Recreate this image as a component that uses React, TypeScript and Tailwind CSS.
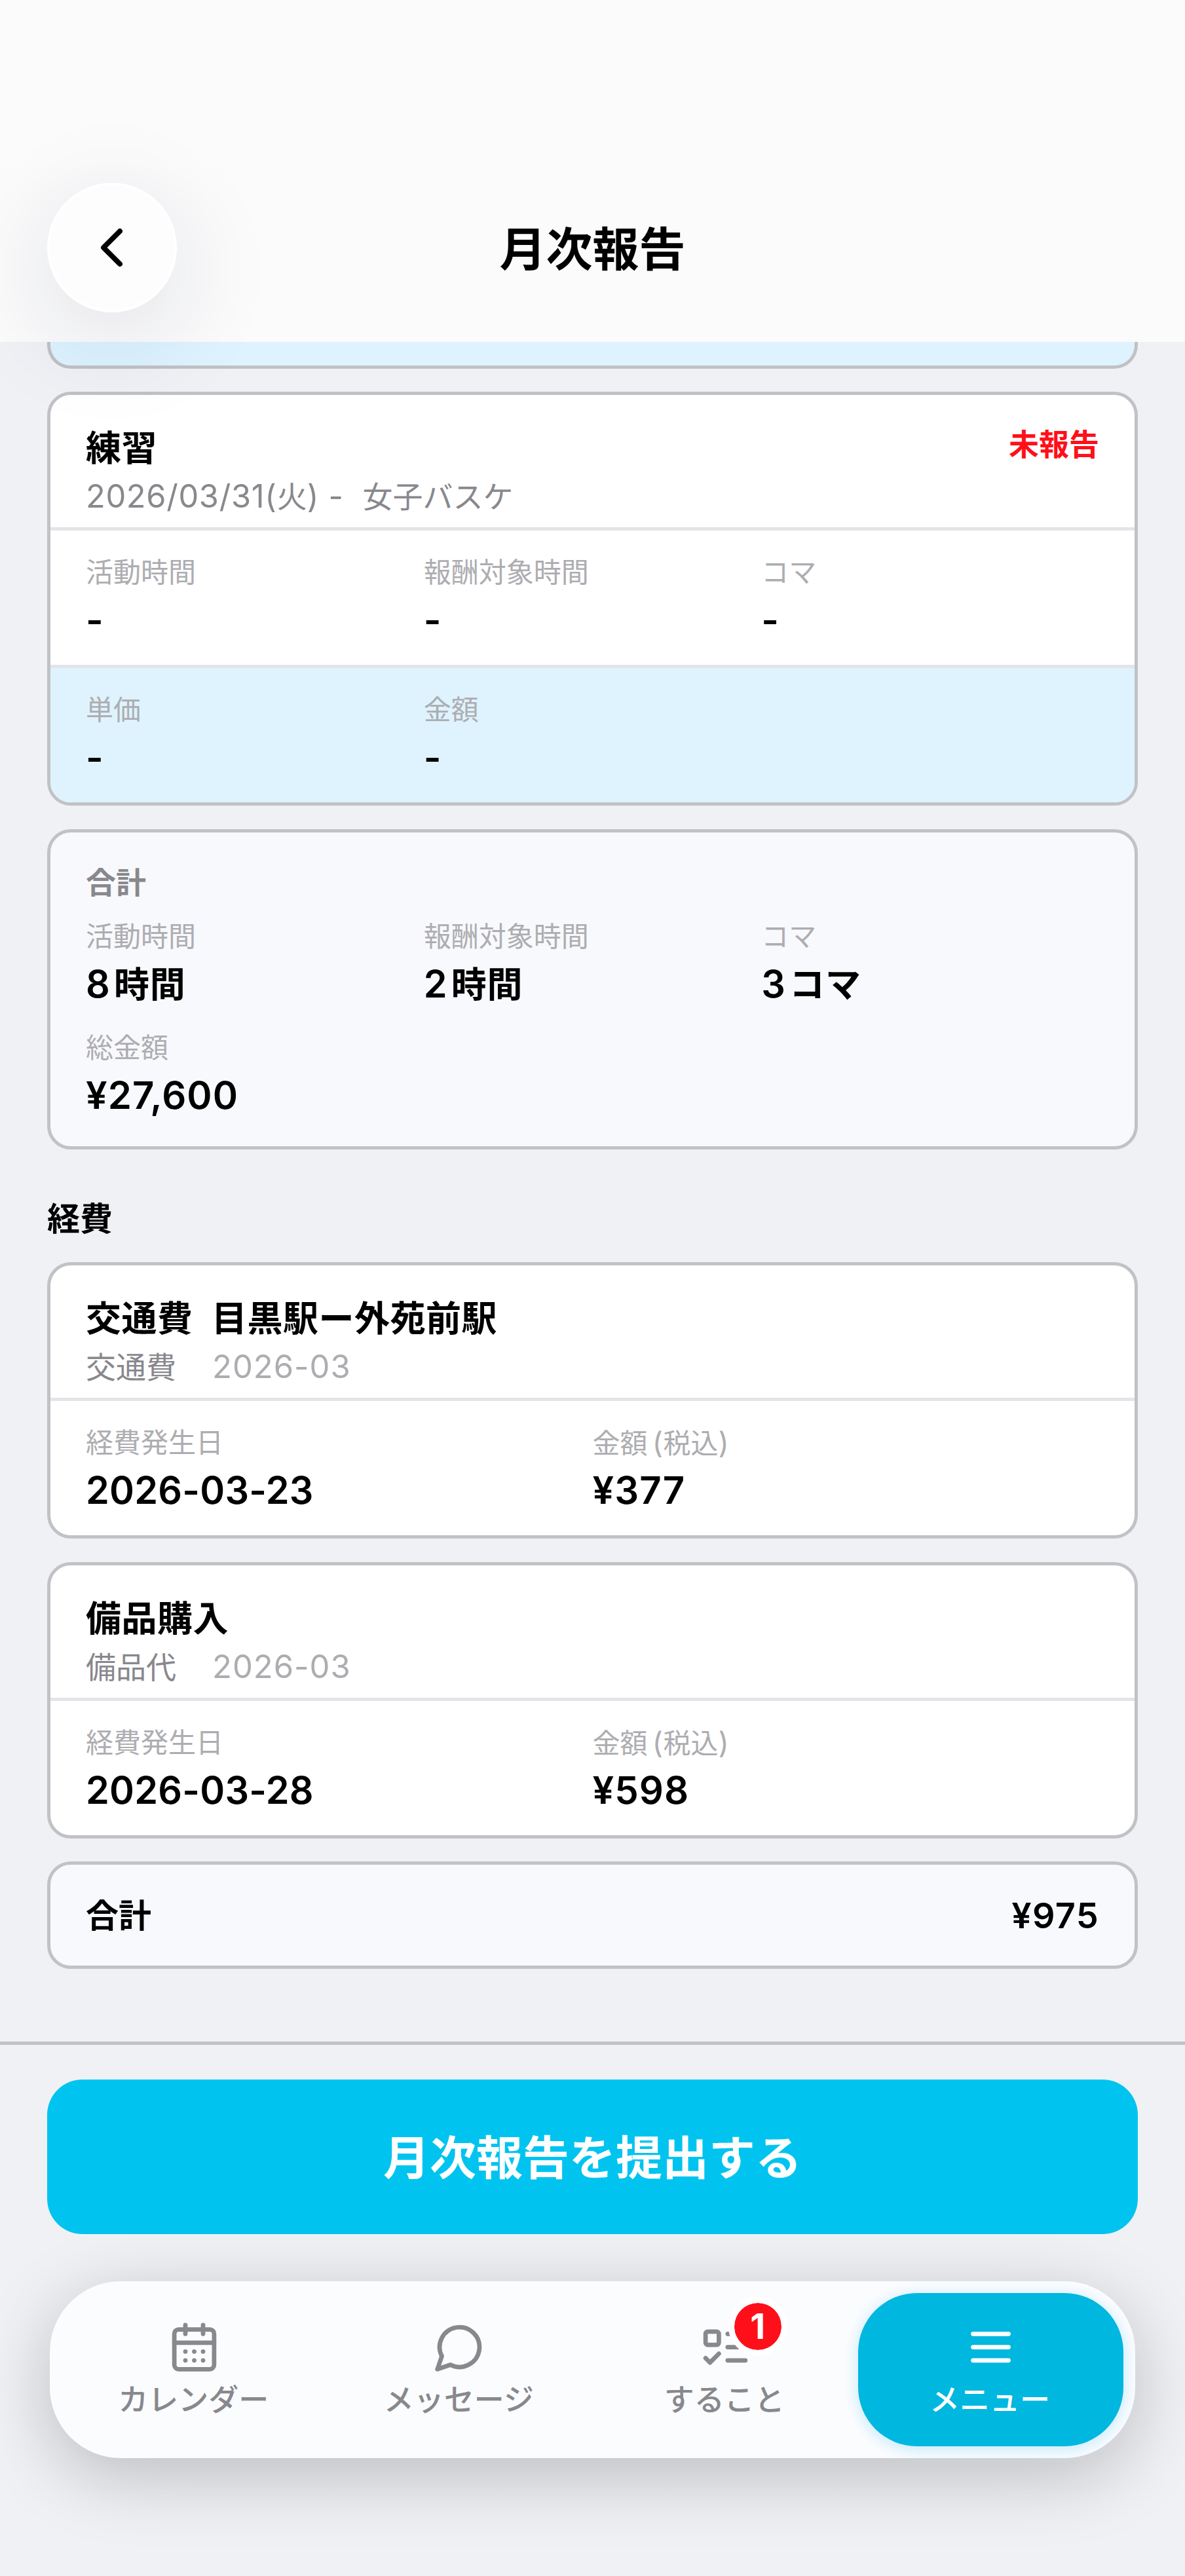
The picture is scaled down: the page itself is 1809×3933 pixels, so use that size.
import React from "react";

// Latin runs are set a little larger than the Japanese ones
const Mix = ({ text }: { text: string }) => {
    const runs = text.match(/[\x20-\x7e¥]+|[^\x20-\x7e¥]+/g) || [];
    return (
        <>
            {runs.map((run, i) =>
                /^[\x20-\x7e¥]/.test(run) ? (
                    <span key={i} className="text-[1.06em] tracking-[0.014em]">{run}</span>
                ) : (
                    <span key={i}>{run}</span>
                )
            )}
        </>
    );
};

// a number, with an optional unit after it
const Value = ({ value }: { value: string }) => {
    const [, num, unit] = value.match(/^([\x20-\x7e¥]+)(.*)$/) || ["", value, ""];
    return (
        <>
            <span className={num.startsWith("¥") ? "text-[1.075em] tracking-[0.018em]" : "text-[1.065em] tracking-[0.004em]"}>
                {num}
            </span>
            {unit && <span className="ml-[0.11em] font-bold tracking-[0.016em]">{unit}</span>}
        </>
    );
};

const Field = ({ label, value }: { label: string; value: string }) => (
    <div>
        <p className="h-[42px] text-[42px] leading-[42px] text-[#adadb1] [word-spacing:-6px]">
            <Mix text={label} />
        </p>
        <p className="mt-[21px] h-[60px] text-[54px] leading-[60px] font-semibold">
            <Value value={value} />
        </p>
    </div>
);

const ExpenseCard = ({ title, kind, date, amount }: { title: string; kind: string; date: string; amount: string }) => (
    <div className="h-[422px] overflow-hidden rounded-[36px] border-5 border-[#c1c2c5] bg-white">
        <div className="h-[207px] border-b-5 border-[#e3e4e8] px-[54px] pt-[52px]">
            <h3 className="h-[60px] text-[54px] leading-[60px] font-bold tracking-[0.5px] whitespace-pre [word-spacing:1px]">{title}</h3>
            <div className="mt-[18px] flex h-[50px] gap-[55px] text-[46px] leading-[50px] text-[#88888d]">
                <span>{kind}</span>
                <span className="text-[49px] tracking-[1px] text-[#adadb1]">2026-03</span>
            </div>
        </div>
        <div className="grid grid-cols-2 px-[54px] pt-[43px]">
            <Field label="経費発生日" value={date} />
            <Field label="金額 (税込)" value={amount} />
        </div>
    </div>
);

const Icon = ({ children }: { children: React.ReactNode }) => (
    <svg
        className="size-[81px]"
        viewBox="0 0 24 24"
        fill="none"
        stroke="currentColor"
        strokeWidth="2"
        strokeLinecap="round"
        strokeLinejoin="round"
    >
        {children}
    </svg>
);

const tabs = [
    {
        name: "カレンダー",
        icon: (
            <Icon>
                <path d="M8 2v4M16 2v4" />
                <rect width="18" height="18" x="3" y="4" rx="2" />
                <path d="M3 10h18M8 14h.01M12 14h.01M16 14h.01M8 18h.01M12 18h.01M16 18h.01" />
            </Icon>
        ),
    },
    {
        name: "メッセージ",
        icon: (
            <Icon>
                <path d="M7.9 20A9 9 0 1 0 4 16.1L2 22Z" />
            </Icon>
        ),
    },
    {
        name: "すること",
        badge: 1,
        icon: (
            <Icon>
                <rect x="3" y="5" width="6" height="6" rx="1" />
                <path d="m3 17 2 2 4-4M13 6h8M13 12h8M13 18h8" />
            </Icon>
        ),
    },
    {
        name: "メニュー",
        active: true,
        icon: (
            <Icon>
                <path d="M4 6h16M4 12h16M4 18h16" />
            </Icon>
        ),
    },
];

const App = () => {
    return (
        <div
            lang="ja"
            className="flex h-[3933px] w-[1809px] flex-col overflow-hidden bg-[#f0f1f5] font-['Inter','Noto_Sans_CJK_JP',sans-serif] text-black"
        >
            <header className="relative z-10 grid h-[522px] shrink-0 grid-cols-[198px_1fr_198px] items-start bg-[#fbfbfb] px-[72px] pt-[279px]">
                <button className="flex size-[198px] items-center justify-center rounded-full border-4 border-white bg-[#fdfdfd] shadow-[0_36px_160px_rgba(20,30,90,0.13)]">
                    <svg width="40" height="64" viewBox="0 0 40 64" fill="none" stroke="black" strokeWidth="8" strokeLinecap="round" strokeLinejoin="round">
                        <path d="M32 7 7 32l25 25" />
                    </svg>
                </button>
                <h1 className="h-[198px] pt-[2px] text-center text-[71px] leading-[198px] font-bold">月次報告</h1>
            </header>

            <main className="px-[72px]">
                {/* end of the previous report, scrolled under the header */}
                <div className="h-[41px] rounded-b-[36px] border-5 border-t-0 border-[#c1c2c5] bg-[#def3fe]"></div>

                <div className="mt-[35px] h-[632px] overflow-hidden rounded-[36px] border-5 border-[#c1c2c5] bg-white">
                    <div className="flex h-[207px] justify-between border-b-5 border-[#e3e4e8] px-[54px] pt-[52px]">
                        <div>
                            <h3 className="h-[60px] text-[54px] leading-[60px] font-bold tracking-[0.5px]">練習</h3>
                            <p className="mt-[18px] h-[50px] text-[46px] leading-[50px] whitespace-pre text-[#88888d]">
                                <Mix text="2026/03/31(火) -  女子バスケ" />
                            </p>
                        </div>
                        <span className="-mt-[2px] text-[46px] leading-[50px] font-bold text-[#ff0f19]">未報告</span>
                    </div>
                    <div className="grid h-[210px] grid-cols-3 border-b-5 border-[#e3e4e8] px-[54px] pt-[43px]">
                        <Field label="活動時間" value="-" />
                        <Field label="報酬対象時間" value="-" />
                        <Field label="コマ" value="-" />
                    </div>
                    <div className="grid h-[205px] grid-cols-3 bg-[#def3fe] px-[54px] pt-[43px]">
                        <Field label="単価" value="-" />
                        <Field label="金額" value="-" />
                    </div>
                </div>

                <div className="mt-[36px] h-[489px] rounded-[36px] border-5 border-[#c1c2c5] bg-[#f8f9fc] px-[54px] pt-[51px]">
                    <h3 className="h-[50px] text-[46px] leading-[50px] font-bold text-[#88888d]">合計</h3>
                    <div className="mt-[37px] grid grid-cols-3 gap-y-[47px]">
                        <Field label="活動時間" value="8時間" />
                        <Field label="報酬対象時間" value="2時間" />
                        <Field label="コマ" value="3コマ" />
                        <Field label="総金額" value="¥27,600" />
                    </div>
                </div>

                <h2 className="mt-[76px] h-[60px] text-[50px] leading-[60px] font-bold">経費</h2>

                <div className="mt-[36px] flex flex-col gap-[36px]">
                    <ExpenseCard title="交通費  目黒駅ー外苑前駅" kind="交通費" date="2026-03-23" amount="¥377" />
                    <ExpenseCard title="備品購入" kind="備品代" date="2026-03-28" amount="¥598" />
                    <div className="-mt-px flex h-[164px] items-center justify-between rounded-[36px] border-5 border-[#c1c2c5] bg-[#f8f9fc] px-[54px] pt-[2px] text-[50px] leading-[60px]">
                        <span className="font-bold">合計</span>
                        <span className="text-[54px] font-semibold tracking-[0.025em]">¥975</span>
                    </div>
                </div>
            </main>

            <footer className="mt-[111px] border-t-5 border-[#c1c2c5] px-[72px] pt-[53px]">
                <button className="h-[236px] w-full rounded-[54px] bg-[#00c4ef] text-[71px] leading-[238px] font-bold text-white">
                    月次報告を提出する
                </button>
                <nav className="relative mx-[4px] mt-[72px] flex h-[270px] rounded-[108px] bg-[#fbfcfe] p-[18px] shadow-[0_27px_108px_rgba(0,0,0,0.22)]">
                    {tabs.map((tab) => (
                        <div
                            key={tab.name}
                            className={
                                tab.active
                                    ? "flex flex-1 flex-col items-center rounded-[90px] bg-[#00b7df] pt-[42px] text-white shadow-[0_4px_18px_5px_#d3effd]"
                                    : "flex flex-1 flex-col items-center pt-[42px] text-[#88888d]"
                            }
                        >
                            <div className="relative">
                                {tab.icon}
                                {tab.badge && (
                                    <span className="absolute -top-[36px] left-[45px] flex size-[90px] items-center justify-center rounded-full border-[9px] border-white bg-[#ff0f19] bg-clip-padding text-[53px] leading-none font-bold text-white">
                                        {tab.badge}
                                    </span>
                                )}
                            </div>
                            <span className="mt-[14px] -ml-[3px] text-[46px] leading-[50px] font-medium">{tab.name}</span>
                        </div>
                    ))}
                </nav>
            </footer>
        </div>
    );
};

export default App;
